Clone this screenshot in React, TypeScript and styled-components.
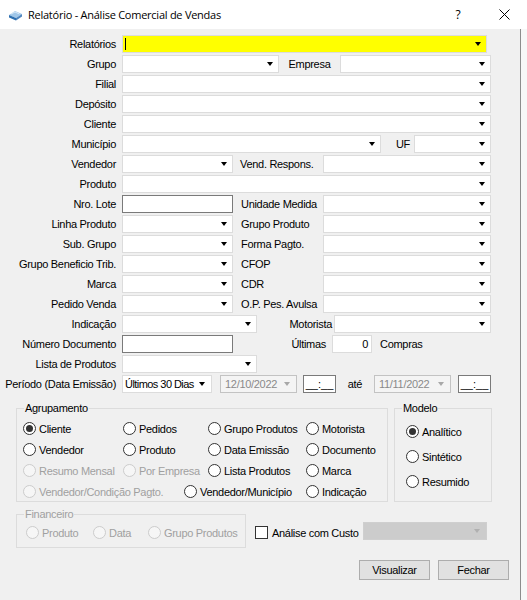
import React from 'react';
import styled, { createGlobalStyle } from 'styled-components';

const GlobalStyle = createGlobalStyle`
  html, body {
    margin: 0;
    padding: 0;
    background: #f7f7f7;
  }
  body {
    font-family: "Liberation Sans", Arial, sans-serif;
    font-size: 11px;
    letter-spacing: -0.3px;
    color: #000;
  }
`;

const Window = styled.div`
  width: 527px;
  height: 600px;
  overflow: hidden;
`;

const TitleBar = styled.div`
  height: 29px;
  display: flex;
  align-items: center;
  background: #fff;
`;

const AppIcon = styled.svg`
  margin-left: 8px;
  flex-shrink: 0;
`;

const Title = styled.span`
  flex: 1;
  margin-left: 5px;
  font-family: "Open Sans", "Noto Sans", sans-serif;
  font-size: 11px;
  letter-spacing: -0.25px;
`;

const CaptionButton = styled.div<{ $w: number }>`
  width: ${p => p.$w}px;
  height: 29px;
  display: flex;
  align-items: center;
  justify-content: center;
  font-family: "Open Sans", "Noto Sans", sans-serif;
  font-size: 12px;
`;

const Body = styled.div`
  width: 520px;
  height: 568px;
  padding-top: 5px;
  background: #f0f0f0;
  border-right: 1px solid #8c8c8c;
  border-bottom: 1px solid #6e6e6e;
  box-sizing: content-box;
`;

const Form = styled.div`
  display: flex;
  flex-direction: column;
`;

const Row = styled.div`
  display: flex;
  align-items: center;
  height: 20px;
`;

const FieldLabel = styled.span`
  width: 122px;
  flex-shrink: 0;
  box-sizing: border-box;
  padding-right: 6px;
  text-align: right;
  white-space: nowrap;
`;

const SideLabel = styled.span<{ $w: number; $align?: string; $pl?: number; $pr?: number }>`
  width: ${p => p.$w}px;
  flex-shrink: 0;
  box-sizing: border-box;
  text-align: ${p => p.$align ?? 'left'};
  padding-left: ${p => p.$pl ?? 0}px;
  padding-right: ${p => p.$pr ?? 0}px;
  white-space: nowrap;
`;

const ComboBox = styled.div<{ $w: number; $bg?: string; $disabled?: boolean }>`
  width: ${p => p.$w}px;
  height: 18px;
  flex-shrink: 0;
  box-sizing: border-box;
  display: flex;
  align-items: center;
  padding-left: 2px;
  border: 1px solid ${p => (p.$disabled ? '#cfcfcf' : '#dcdcdc')};
  background: ${p => p.$bg ?? (p.$disabled ? '#cccccc' : '#fff')};
`;

const ComboText = styled.span`
  white-space: nowrap;
  letter-spacing: -0.55px;
`;

const TextCaret = styled.span`
  width: 1px;
  height: 12px;
  background: #000;
`;

const Arrow = styled.span<{ $color?: string; $mr?: number }>`
  margin-left: auto;
  margin-right: ${p => p.$mr ?? 5}px;
  width: 0;
  height: 0;
  border-left: 3.5px solid transparent;
  border-right: 3.5px solid transparent;
  border-top: 4px solid ${p => p.$color ?? '#000'};
`;

const TextBox = styled.div<{ $w: number; $light?: boolean }>`
  width: ${p => p.$w}px;
  height: 18px;
  flex-shrink: 0;
  box-sizing: border-box;
  display: flex;
  align-items: center;
  justify-content: flex-end;
  padding-right: 3px;
  background: #fff;
  border: 1px solid ${p => (p.$light ? '#dcdcdc' : '#7a7a7a')};
`;

const DateBox = styled.div<{ $ml: number }>`
  width: 77px;
  height: 18px;
  margin-left: ${p => p.$ml}px;
  flex-shrink: 0;
  box-sizing: border-box;
  display: flex;
  align-items: center;
  padding-left: 4px;
  color: #8a8a8a;
  background: #f4f4f4;
  border: 1px solid #c3c3c3;
`;

const TimeBox = styled.div<{ $ml: number }>`
  width: 33px;
  height: 18px;
  margin-left: ${p => p.$ml}px;
  flex-shrink: 0;
  box-sizing: border-box;
  display: flex;
  align-items: center;
  justify-content: center;
  background: #fff;
  border: 1px solid #7a7a7a;
  letter-spacing: 0;
`;

const Lower = styled.div`
  margin-top: 8px;
  padding-left: 16px;
  display: flex;
  flex-direction: column;
`;

const GroupsRow = styled.div`
  display: flex;
  gap: 6px;
`;

const GroupBox = styled.fieldset<{ $w: number; $h: number; $pl: number; $disabled?: boolean }>`
  width: ${p => p.$w}px;
  height: ${p => p.$h}px;
  box-sizing: border-box;
  margin: 0;
  padding: 0 0 0 ${p => p.$pl}px;
  border: 1px solid #dcdcdc;
  color: ${p => (p.$disabled ? '#a0a0a0' : '#000')};
`;

const GroupLegend = styled.legend<{ $ml: number }>`
  margin-left: ${p => p.$ml}px;
  padding: 0 1px;
  line-height: 13px;
  font-size: 11px;
`;

const RadioRow = styled.div<{ $h: number; $mt?: number }>`
  display: flex;
  align-items: center;
  height: ${p => p.$h}px;
  margin-top: ${p => p.$mt ?? 0}px;
`;

const RadioItem = styled.div<{ $w?: number; $disabled?: boolean }>`
  display: flex;
  align-items: center;
  flex-shrink: 0;
  width: ${p => (p.$w ? `${p.$w}px` : 'auto')};
  white-space: nowrap;
  color: ${p => (p.$disabled ? '#a0a0a0' : '#000')};
`;

const RadioCircle = styled.span<{ $checked?: boolean; $disabled?: boolean }>`
  width: 13px;
  height: 13px;
  box-sizing: border-box;
  border-radius: 50%;
  margin-right: 3px;
  display: flex;
  align-items: center;
  justify-content: center;
  border: 1px solid ${p => (p.$disabled ? '#cccccc' : '#333')};
  background: ${p => (p.$disabled ? '#f6f6f6' : '#fff')};
  &::after {
    content: '';
    display: ${p => (p.$checked ? 'block' : 'none')};
    width: 7px;
    height: 7px;
    border-radius: 50%;
    background: #333;
  }
`;

const BottomRow = styled.div`
  display: flex;
  margin-top: 6px;
`;

const CostArea = styled.div`
  display: flex;
  align-items: center;
  height: 18px;
  margin-top: 14px;
  margin-left: 9px;
`;

const CheckBox = styled.span`
  width: 13px;
  height: 13px;
  box-sizing: border-box;
  margin-top: 3px;
  border: 1px solid #333;
  background: #fff;
  flex-shrink: 0;
`;

const CheckLabel = styled.span`
  width: 95px;
  box-sizing: border-box;
  padding-left: 4px;
  margin-top: 3px;
  white-space: nowrap;
`;

const ButtonBar = styled.div`
  display: flex;
  justify-content: flex-end;
  gap: 8px;
  margin-top: 12px;
  padding-right: 11px;
`;

const Button = styled.button`
  width: 71px;
  height: 20px;
  padding: 0;
  font-family: "Liberation Sans", Arial, sans-serif;
  font-size: 11px;
  letter-spacing: -0.3px;
  color: #000;
  background: #e1e1e1;
  border: 1px solid #adadad;
`;

type RadioProps = { label: string; w?: number; checked?: boolean; disabled?: boolean };

const Radio = ({ label, w, checked, disabled }: RadioProps) => (
  <RadioItem $w={w} $disabled={disabled}>
    <RadioCircle $checked={checked} $disabled={disabled} />
    {label}
  </RadioItem>
);

const Combo = ({ w, bg, children }: { w: number; bg?: string; children?: React.ReactNode }) => (
  <ComboBox $w={w} $bg={bg}>
    {children}
    <Arrow />
  </ComboBox>
);

const pairRows = [
  ['Nro. Lote', 'Unidade Medida'],
  ['Linha Produto', 'Grupo Produto'],
  ['Sub. Grupo', 'Forma Pagto.'],
  ['Grupo Beneficio Trib.', 'CFOP'],
  ['Marca', 'CDR'],
  ['Pedido Venda', 'O.P. Pes. Avulsa'],
];

export default function App() {
  return (
    <Window>
      <GlobalStyle />
      <TitleBar>
        <AppIcon width="15" height="14" viewBox="0 0 15 14">
          <path d="M1 7 L7 3 L14 6 L8 10 Z" fill="#9fc6e8" />
          <path d="M1 7 L8 10 L8 12.5 L1 9.5 Z" fill="#2d6fb0" />
          <path d="M8 10 L14 6 L14 8.5 L8 12.5 Z" fill="#4f86c0" />
          <path d="M3 6 L7 4 L11.5 6" stroke="#e8f2fb" strokeWidth="0.8" fill="none" />
        </AppIcon>
        <Title>Relatório - Análise Comercial de Vendas</Title>
        <CaptionButton $w={46}>?</CaptionButton>
        <CaptionButton $w={46}>
          <svg width="11" height="11" viewBox="0 0 11 11">
            <path d="M0.5 0.5 L10.5 10.5 M10.5 0.5 L0.5 10.5" stroke="#000" strokeWidth="1" />
          </svg>
        </CaptionButton>
      </TitleBar>
      <Body>
        <Form>
          <Row>
            <FieldLabel>Relatórios</FieldLabel>
            <Combo w={365} bg="#ffff00">
              <TextCaret />
            </Combo>
          </Row>
          <Row>
            <FieldLabel>Grupo</FieldLabel>
            <Combo w={157} />
            <SideLabel $w={61} $align="center">Empresa</SideLabel>
            <Combo w={151} />
          </Row>
          {['Filial', 'Depósito', 'Cliente'].map(l => (
            <Row key={l}>
              <FieldLabel>{l}</FieldLabel>
              <Combo w={369} />
            </Row>
          ))}
          <Row>
            <FieldLabel>Município</FieldLabel>
            <Combo w={259} />
            <SideLabel $w={33} $align="right" $pr={4}>UF</SideLabel>
            <Combo w={77} />
          </Row>
          <Row>
            <FieldLabel>Vendedor</FieldLabel>
            <Combo w={111} />
            <SideLabel $w={90} $pl={7}>Vend. Respons.</SideLabel>
            <Combo w={168} />
          </Row>
          <Row>
            <FieldLabel>Produto</FieldLabel>
            <Combo w={369} />
          </Row>
          {pairRows.map(([a, b], i) => (
            <Row key={a}>
              <FieldLabel>{a}</FieldLabel>
              {i === 0 ? <TextBox $w={111} /> : <Combo w={111} />}
              <SideLabel $w={90} $pl={8}>{b}</SideLabel>
              <Combo w={168} />
            </Row>
          ))}
          <Row>
            <FieldLabel>Indicação</FieldLabel>
            <Combo w={135} />
            <SideLabel $w={77} $align="right" $pr={2}>Motorista</SideLabel>
            <Combo w={157} />
          </Row>
          <Row>
            <FieldLabel>Número Documento</FieldLabel>
            <TextBox $w={111} />
            <SideLabel $w={99} $align="right" $pr={6}>Últimas</SideLabel>
            <TextBox $w={40} $light>0</TextBox>
            <SideLabel $w={60} $pl={8}>Compras</SideLabel>
          </Row>
          <Row>
            <FieldLabel>Lista de Produtos</FieldLabel>
            <Combo w={135} />
          </Row>
          <Row>
            <FieldLabel>Período (Data Emissão)</FieldLabel>
            <ComboBox $w={90}>
              <ComboText>Últimos 30 Dias</ComboText>
              <Arrow $mr={6} />
            </ComboBox>
            <DateBox $ml={8}>
              12/10/2022
              <Arrow $color="#a8a8a8" $mr={6} />
            </DateBox>
            <TimeBox $ml={6}>__:__</TimeBox>
            <SideLabel $w={38} $align="center">até</SideLabel>
            <DateBox $ml={0}>
              11/11/2022
              <Arrow $color="#a8a8a8" $mr={6} />
            </DateBox>
            <TimeBox $ml={7}>__:__</TimeBox>
          </Row>
        </Form>
        <Lower>
          <GroupsRow>
            <GroupBox $w={372} $h={100} $pl={6}>
              <GroupLegend $ml={1}>Agrupamento</GroupLegend>
              <RadioRow $h={21} $mt={3}>
                <Radio w={100} label="Cliente" checked />
                <Radio w={85} label="Pedidos" />
                <Radio w={98} label="Grupo Produtos" />
                <Radio label="Motorista" />
              </RadioRow>
              <RadioRow $h={21}>
                <Radio w={100} label="Vendedor" />
                <Radio w={85} label="Produto" />
                <Radio w={98} label="Data Emissão" />
                <Radio label="Documento" />
              </RadioRow>
              <RadioRow $h={21}>
                <Radio w={100} label="Resumo Mensal" disabled />
                <Radio w={85} label="Por Empresa" disabled />
                <Radio w={98} label="Lista Produtos" />
                <Radio label="Marca" />
              </RadioRow>
              <RadioRow $h={21}>
                <Radio w={161} label="Vendedor/Condição Pagto." disabled />
                <Radio w={122} label="Vendedor/Município" />
                <Radio label="Indicação" />
              </RadioRow>
            </GroupBox>
            <GroupBox $w={98} $h={100} $pl={11}>
              <GroupLegend $ml={-4}>Modelo</GroupLegend>
              <RadioRow $h={25} $mt={4}>
                <Radio label="Analítico" checked />
              </RadioRow>
              <RadioRow $h={25}>
                <Radio label="Sintético" />
              </RadioRow>
              <RadioRow $h={25}>
                <Radio label="Resumido" />
              </RadioRow>
            </GroupBox>
          </GroupsRow>
          <BottomRow>
            <GroupBox $w={230} $h={40} $pl={9} $disabled>
              <GroupLegend $ml={-2}>Financeiro</GroupLegend>
              <RadioRow $h={21} $mt={1}>
                <Radio w={67} label="Produto" disabled />
                <Radio w={55} label="Data" disabled />
                <Radio label="Grupo Produtos" disabled />
              </RadioRow>
            </GroupBox>
            <CostArea>
              <CheckBox />
              <CheckLabel>Análise com Custo</CheckLabel>
              <ComboBox $w={124} $disabled>
                <Arrow $color="#b0b0b0" $mr={6} />
              </ComboBox>
            </CostArea>
          </BottomRow>
          <ButtonBar>
            <Button>Visualizar</Button>
            <Button>Fechar</Button>
          </ButtonBar>
        </Lower>
      </Body>
    </Window>
  );
}
